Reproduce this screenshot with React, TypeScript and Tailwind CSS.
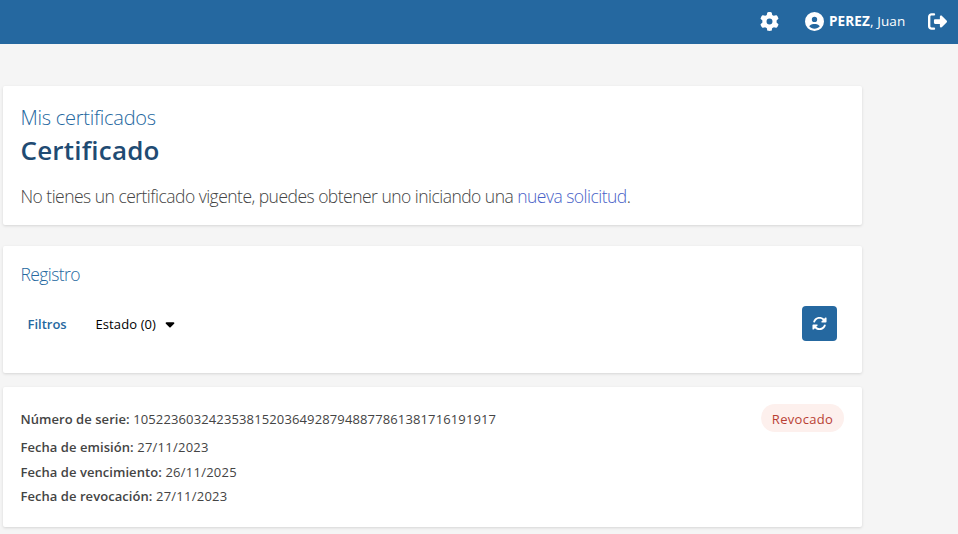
import type { ReactNode } from "react";
import { FaCaretDown, FaCircleUser, FaGear, FaRightFromBracket, FaRotate } from "react-icons/fa6";

function Card({ className, children }: { className: string; children: ReactNode }) {
  return (
    <section className={`ml-[3px] w-[859px] rounded-[2px] bg-white pl-[17.5px] shadow-[0_1px_3px_rgba(0,0,0,0.13)] ${className}`}>
      {children}
    </section>
  );
}

function Field({ label, value, className }: { label: string; value: string; className?: string }) {
  return (
    <p className={`whitespace-nowrap ${className ?? ""}`}>
      <span className="font-semibold tracking-[0.05px]">{label}</span> <span>{value}</span>
    </p>
  );
}

export default function App() {
  return (
    <div className="h-[534px] w-[958px] overflow-hidden bg-[#f5f5f5] font-['Open_Sans','Noto_Sans',sans-serif] text-[#444]">
      <header className="flex h-11 items-center bg-[#2568a0] pb-[2px] pl-[760px] text-white">
        <FaGear className="size-[19px] shrink-0" />
        <div className="ml-[25.5px] flex w-[101.5px] shrink-0 items-center gap-[5.5px] whitespace-nowrap text-[13.5px] tracking-[0.12px]">
          <FaCircleUser className="size-[19px] shrink-0" />
          <span>
            <b>PEREZ</b>, Juan
          </span>
        </div>
        <FaRightFromBracket className="ml-[22px] size-[19px] shrink-0" />
      </header>
      <main className="pt-[42px]">
        <Card className="h-[139px] pt-[20px]">
          <h2 className="text-[20px] font-light leading-6 tracking-[-0.25px] text-[#2568a0]">Mis certificados</h2>
          <h1 className="mt-[2px] text-[26px] font-semibold leading-9 tracking-[0.2px] text-[#1f4b73]">Certificado</h1>
          <p className="mt-[16px] whitespace-nowrap text-[17.5px] font-light leading-6 tracking-[-0.525px]">
            No tienes un certificado vigente, puedes obtener uno iniciando una <a className="text-[#485fc7]">nueva solicitud</a>.
          </p>
        </Card>
        <Card className="mt-[21px] h-[127px] pt-[16px]">
          <h2 className="text-[17.5px] font-light leading-6 tracking-[-0.6px] text-[#2568a0]">Registro</h2>
          <div className="mt-[20px] flex h-[35px] items-center pl-[7px] pr-[25px] text-[13px]">
            <span className="w-[68px] pt-[2px] font-semibold text-[#2568a0]">Filtros</span>
            <button className="flex items-center gap-[7px] text-black">
              <span className="pt-[2px] tracking-[0.1px]">Estado (0)</span>
              <FaCaretDown className="size-[14px]" />
            </button>
            <button className="ml-auto flex size-[35px] items-center justify-center rounded-[4px] bg-[#2568a0] text-white">
              <FaRotate className="size-[15px]" />
            </button>
          </div>
        </Card>
        <Card className="mt-[14px] flex h-[140px] items-start justify-between pr-[18px] pt-[17px] text-[13px]">
          <div>
            <Field className="leading-[30px] tracking-[0.13px]" label="Número de serie:" value="105223603242353815203649287948877861381716191917" />
            <Field className="leading-[26px] tracking-[0.25px]" label="Fecha de emisión:" value="27/11/2023" />
            <Field className="leading-[24px] tracking-[0.25px]" label="Fecha de vencimiento:" value="26/11/2025" />
            <Field className="leading-[24.5px] tracking-[0.25px]" label="Fecha de revocación:" value="27/11/2023" />
          </div>
          <span className="flex h-7 w-[83px] items-center justify-center rounded-full bg-[#fdf0ed] pt-[3px] font-medium tracking-[0.3px] text-[#b93f33]">Revocado</span>
        </Card>
      </main>
    </div>
  );
}
